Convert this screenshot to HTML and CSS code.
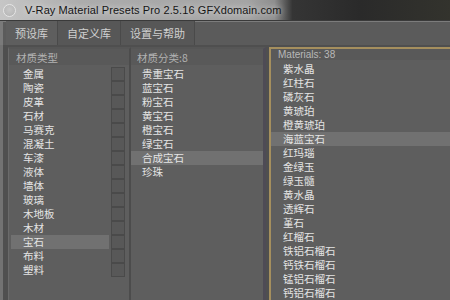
FILE: index.html
```html
<!DOCTYPE html>
<html lang="zh">

<head>
     <meta charset="UTF-8">
     <title>V-Ray Material Presets Pro</title>
     <link rel="stylesheet" href="styles.css">
</head>

<body>
     <div class="window">
          <div class="titlebar">
               <span class="app-icon"></span>
               <span class="title">V-Ray Material Presets Pro 2.5.16 GFXdomain.com</span>
          </div>

          <div class="tabs">
               <div class="tab active">预设库</div>
               <div class="tab">自定义库</div>
               <div class="tab">设置与帮助</div>
          </div>

          <div class="content">
               <div class="panel types">
                    <div class="panel-head">材质类型</div>
                    <ul class="list">
                         <li><span class="name">金属</span><span class="swatch"></span></li>
                         <li><span class="name">陶瓷</span><span class="swatch"></span></li>
                         <li><span class="name">皮革</span><span class="swatch"></span></li>
                         <li><span class="name">石材</span><span class="swatch"></span></li>
                         <li><span class="name">马赛克</span><span class="swatch"></span></li>
                         <li><span class="name">混凝土</span><span class="swatch"></span></li>
                         <li><span class="name">车漆</span><span class="swatch"></span></li>
                         <li><span class="name">液体</span><span class="swatch"></span></li>
                         <li><span class="name">墙体</span><span class="swatch"></span></li>
                         <li><span class="name">玻璃</span><span class="swatch"></span></li>
                         <li><span class="name">木地板</span><span class="swatch"></span></li>
                         <li><span class="name">木材</span><span class="swatch"></span></li>
                         <li class="selected"><span class="name">宝石</span><span class="swatch"></span></li>
                         <li><span class="name">布料</span><span class="swatch"></span></li>
                         <li><span class="name">塑料</span><span class="swatch"></span></li>
                    </ul>
               </div>

               <div class="panel cats">
                    <div class="panel-head">材质分类:8</div>
                    <ul class="list">
                         <li>贵重宝石</li>
                         <li>蓝宝石</li>
                         <li>粉宝石</li>
                         <li>黄宝石</li>
                         <li>橙宝石</li>
                         <li>绿宝石</li>
                         <li class="selected">合成宝石</li>
                         <li>珍珠</li>
                    </ul>
               </div>

               <div class="panel materials">
                    <div class="panel-head">Materials: 38</div>
                    <ul class="list">
                         <li>紫水晶</li>
                         <li>红柱石</li>
                         <li>磷灰石</li>
                         <li>黄琥珀</li>
                         <li>橙黄琥珀</li>
                         <li class="selected">海蓝宝石</li>
                         <li>红玛瑙</li>
                         <li>金绿玉</li>
                         <li>绿玉髓</li>
                         <li>黄水晶</li>
                         <li>透辉石</li>
                         <li>堇石</li>
                         <li>红榴石</li>
                         <li>铁铝石榴石</li>
                         <li>钙铁石榴石</li>
                         <li>锰铝石榴石</li>
                         <li>钙铝石榴石</li>
                    </ul>
               </div>
          </div>
     </div>
</body>

</html>
```

FILE: styles.css
```css
body {
  margin: 0;
  background: #2c2c2c;
}

.window {
  width: 450px;
  height: 300px;
  display: flex;
  flex-direction: column;
  overflow: hidden;
  font-family: "Liberation Sans", "Noto Sans CJK SC", sans-serif;
}

/* title bar (aero glass look) */
.titlebar {
  height: 20px;
  display: flex;
  align-items: center;
  background: linear-gradient(90deg, #c6c6c6 0, #acacac 18%, #a4a4a4 55%, #8e8e8e 61%, #353535 65%, #2a2a2a 80%, #33332d 100%);
}

.app-icon {
  width: 11px;
  height: 11px;
  margin: 0 9px 0 3px;
  border-radius: 50%;
  border: 1px solid #e6e6e6;
  background: radial-gradient(circle at 50% 40%, #c9c9c9, #b2b2b2);
}

.title {
  font-size: 11px;
  letter-spacing: 0.1px;
  color: #151515;
  white-space: nowrap;
  text-shadow: 0 0 6px rgba(255, 255, 255, 0.85);
}

/* tabs */
.tabs {
  height: 24px;
  display: flex;
  padding-left: 6px;
  border-top: 1px solid #3a3a3a;
  box-shadow: inset 0 1px 0 #7c7c7c, inset 3px 0 0 #7a7a7a;
  background: #5b5b5b;
}

.tab {
  display: flex;
  align-items: center;
  padding: 0 9px;
  border-right: 1px solid #4a4a4a;
  font-family: "Noto Sans CJK SC", sans-serif;
  font-size: 11px;
  color: #cfcfcf;
  background: #575757;
}

.tab.active {
  background: #5e5e5e;
}

/* panels */
.content {
  flex: 1;
  display: flex;
  min-height: 0;
  padding: 2px 0 0 8px;
  border-left: 3px solid #727272;
  background: #4f4f4f;
}

.panel {
  display: flex;
  flex-direction: column;
  border-top: 2px solid #565656;
  background: #5e5e5e;
}

.panel-head {
  height: 16px;
  display: flex;
  align-items: center;
  font-family: "Noto Sans CJK SC", sans-serif;
  font-size: 10.5px;
  color: #b2b2b2;
  background: #595959;
}

.list {
  list-style: none;
  margin: 0;
  padding: 2px 0 0;
  font-family: "Noto Sans CJK SC", sans-serif;
  font-size: 10.5px;
  color: #e4e4e4;
}

.list li {
  height: 14px;
  line-height: 14px;
  white-space: nowrap;
}

.list li.selected {
  background: #717171;
}

.types {
  width: 120px;
  margin-left: -3px;
  border-left: 1px solid #6a6a6a;
  border-right: 2px solid #4c4c4c;
}

.types .panel-head {
  padding-left: 7px;
}

.types .list {
  padding-left: 2px;
}

.types .list li {
  display: flex;
}

.types .list li.selected {
  background: none;
}

.types .name {
  width: 86px;
  padding-left: 12px;
}

.types .selected .name {
  background: #717171;
}

.swatch {
  width: 12px;
  height: 12px;
  margin-left: 2px;
  border: 1px solid #4a4a4a;
  background: #585858;
}

.cats {
  width: 132px;
  border-right: 3px solid #4e4b55;
}

.cats .panel-head {
  padding-left: 6px;
}

.cats .list li {
  padding-left: 11px;
}

.materials {
  flex: 1;
  margin-left: 3px;
  border-top: 2px solid #a58f5e;
  border-left: 2px solid #a58f5e;
}

.materials .panel-head {
  padding-left: 7px;
  font-family: "Liberation Sans", sans-serif;
  font-size: 10px;
  color: #b8b8b8;
}

.materials .list li {
  padding-left: 12px;
}
```
